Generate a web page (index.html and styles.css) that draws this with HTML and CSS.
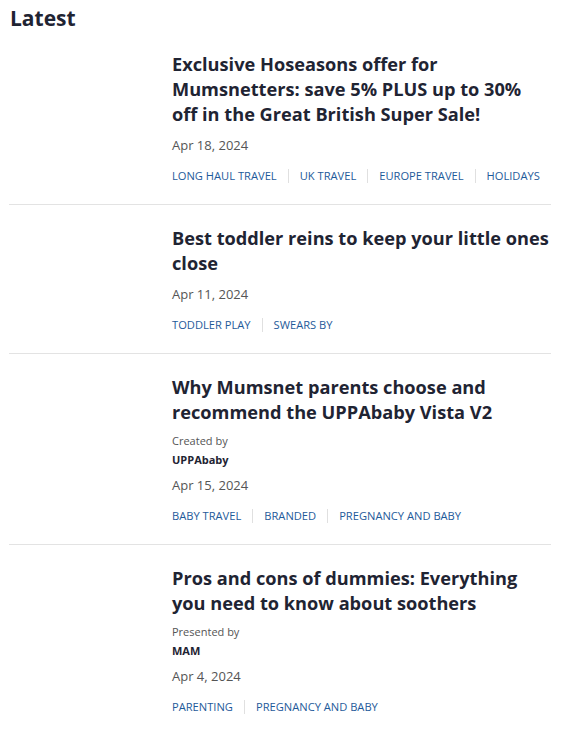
FILE: index.html
```html
<!DOCTYPE html>
<html lang="en">
<head>
<meta charset="utf-8">
<title>Latest</title>
<link rel="stylesheet" href="styles.css">
</head>
<body>
<section class="latest">
  <h2 class="latest-title">Latest</h2>
  <ul class="list">
    <li class="item">
      <div class="thumb"></div>
      <div class="content">
        <h3 class="title">Exclusive Hoseasons offer for Mumsnetters: save 5% PLUS up to 30% off in the Great British Super Sale!</h3>
        <div class="date">Apr 18, 2024</div>
        <ul class="tags">
          <li>LONG HAUL TRAVEL</li><li>UK TRAVEL</li><li>EUROPE TRAVEL</li><li>HOLIDAYS</li>
        </ul>
      </div>
    </li>
    <li class="item">
      <div class="thumb"></div>
      <div class="content">
        <h3 class="title">Best toddler reins to keep your little ones close</h3>
        <div class="date">Apr 11, 2024</div>
        <ul class="tags">
          <li>TODDLER PLAY</li><li>SWEARS BY</li>
        </ul>
      </div>
    </li>
    <li class="item">
      <div class="thumb"></div>
      <div class="content">
        <h3 class="title">Why Mumsnet parents choose and recommend the UPPAbaby Vista V2</h3>
        <div class="sponsor-label">Created by</div>
        <div class="sponsor">UPPAbaby</div>
        <div class="date">Apr 15, 2024</div>
        <ul class="tags">
          <li>BABY TRAVEL</li><li>BRANDED</li><li>PREGNANCY AND BABY</li>
        </ul>
      </div>
    </li>
    <li class="item">
      <div class="thumb"></div>
      <div class="content">
        <h3 class="title">Pros and cons of dummies: Everything you need to know about soothers</h3>
        <div class="sponsor-label">Presented by</div>
        <div class="sponsor">MAM</div>
        <div class="date">Apr 4, 2024</div>
        <ul class="tags">
          <li>PARENTING</li><li>PREGNANCY AND BABY</li>
        </ul>
      </div>
    </li>
  </ul>
</section>
</body>
</html>
```
FILE: styles.css
```css
* { box-sizing: border-box; }
body {
  margin: 0;
  background: #fff;
  font-family: "Open Sans", "Noto Sans", sans-serif;
  color: #1f2433;
}
.latest {
  width: 551px;
  padding-left: 9px;
}
.latest-title {
  margin: 0;
  padding: 4px 0 0 1px;
  font-size: 21px;
  line-height: 28px;
  font-weight: 700;
  color: #1f2433;
}
.list {
  list-style: none;
  margin: 0;
  padding: 0;
}
.item {
  display: grid;
  grid-template-columns: 151px 1fr;
  column-gap: 12px;
  padding: 21px 0 21px;
  border-bottom: 1px solid #e3e3e3;
}
.item:first-child { padding-top: 20px; }
.item:last-child { border-bottom: none; }
.thumb { width: 151px; }
.title {
  margin: 0 0 8px;
  font-size: 18.2px;
  line-height: 25px;
  font-weight: 700;
  color: #1f2433;
}
.sponsor-label {
  font-size: 11px;
  line-height: 16px;
  color: #555;
  margin-top: 1px;
}
.sponsor {
  font-size: 11px;
  line-height: 16px;
  margin-top: 3px;
  font-weight: 700;
  color: #1f2433;
  margin-bottom: 7px;
}
.date {
  font-size: 13px;
  line-height: 20px;
  color: #555;
  margin-top: 2px;
  margin-bottom: 14px;
}
.tags {
  list-style: none;
  margin: 0;
  padding: 0;
  display: flex;
  align-items: center;
}
.tags li {
  font-size: 11.15px;
  line-height: 14px;
  color: #1e5a9a;
  padding: 0 11px;
  border-left: 1px solid #e0e0e0;
  height: 14px;
  display: flex;
  align-items: center;
}
.tags li:first-child { padding-left: 0; border-left: none; }
```
